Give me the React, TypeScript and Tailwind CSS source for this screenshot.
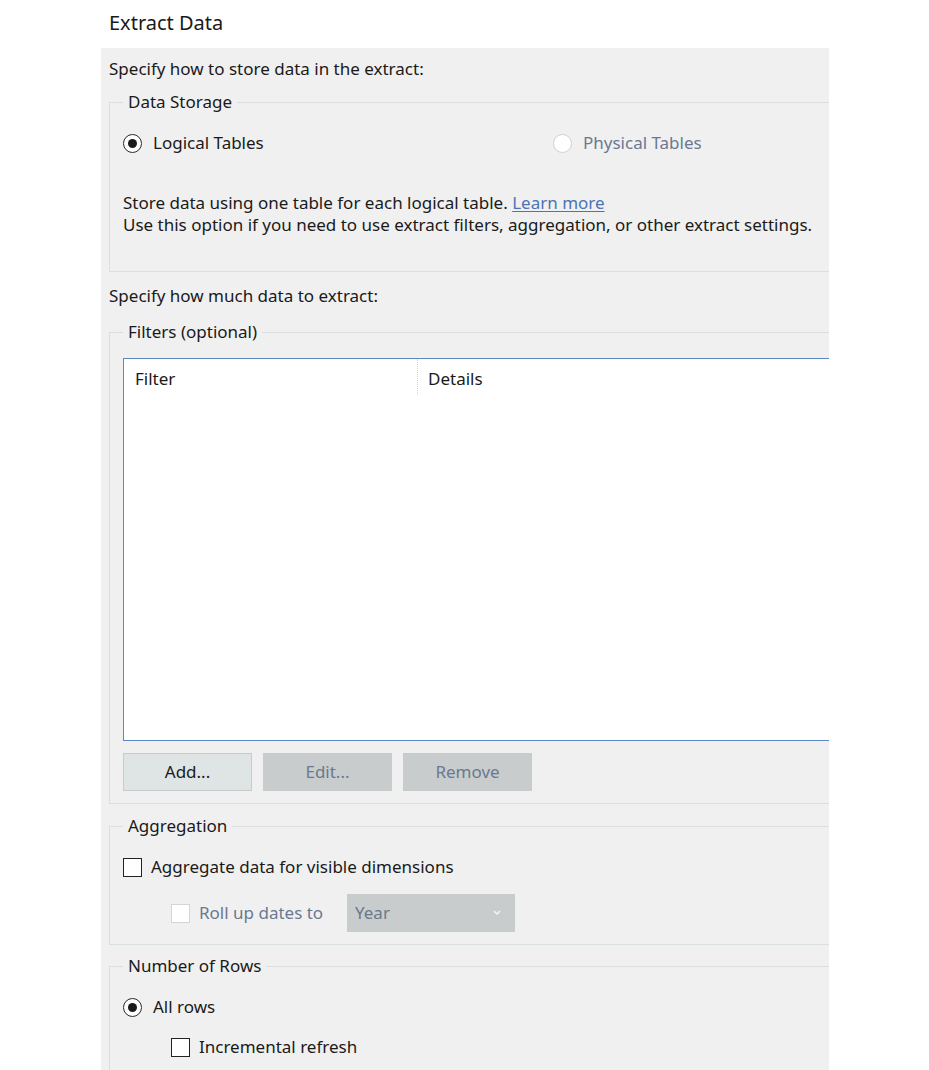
import type { ReactNode } from "react";

const font = { fontFamily: '"Noto Sans", "Open Sans", "DejaVu Sans", sans-serif' };

function GroupBox({ title, children, className = "" }: { title: string; children: ReactNode; className?: string }) {
  return (
    <fieldset className={`border border-r-0 border-[#d9dede] pl-[13px] pr-0 ${className}`}>
      <legend className="px-[5px] text-[17px] leading-[22px] text-[#1a1a1a]">{title}</legend>
      {children}
    </fieldset>
  );
}

function Radio({ checked, disabled, label }: { checked?: boolean; disabled?: boolean; label: string }) {
  return (
    <div className="flex items-center h-[22px]">
      <span
        className={`w-[19px] h-[19px] rounded-full border flex items-center justify-center bg-white ${
          disabled ? "border-[#cfd2d2]" : "border-[#2a2a2a]"
        }`}
      >
        {checked && <span className="w-[9px] h-[9px] rounded-full bg-[#1a1a1a]" />}
      </span>
      <span className={`ml-[11px] text-[17px] ${disabled ? "text-[#6b7890]" : "text-[#1a1a1a]"}`}>{label}</span>
    </div>
  );
}

function Checkbox({ disabled, label }: { disabled?: boolean; label: string }) {
  return (
    <div className="flex items-center h-[22px]">
      <span className={`w-[19px] h-[19px] border-[1.5px] bg-white ${disabled ? "border-[#d3d6d6]" : "border-[#222]"}`} />
      <span className={`ml-[9px] text-[17px] ${disabled ? "text-[#6b7890]" : "text-[#1a1a1a]"}`}>{label}</span>
    </div>
  );
}

function Button({ label, disabled }: { label: string; disabled?: boolean }) {
  return (
    <button
      className={`w-[129px] h-[38px] text-[17px] border ${
        disabled ? "bg-[#c9cccc] border-[#c9cccc] text-[#6b7890]" : "bg-[#dfe4e4] border-[#c6cbcb] text-[#1a1a1a]"
      }`}
    >
      {label}
    </button>
  );
}

export default function App() {
  return (
    <div className="min-h-[1070px] bg-white pl-[101px]" style={font}>
      <div className="pl-[8px] pt-[9px] h-[48px] text-[20px] leading-[28px] text-[#1a1a1a]">Extract Data</div>
      <div className="w-[728px] h-[1022px] bg-[#f0f0f0] pl-[8px] pt-[10px] overflow-hidden text-[#1a1a1a]">
        <p className="text-[17px] leading-[22px]">Specify how to store data in the extract:</p>

        <GroupBox title="Data Storage" className="mt-[11px] pb-[35px]">
          <div className="flex mt-[19px]">
            <div className="w-[430px]">
              <Radio checked label="Logical Tables" />
            </div>
            <Radio disabled label="Physical Tables" />
          </div>
          <div className="mt-[38px] text-[17px] leading-[22px]">
            <p>
              Store data using one table for each logical table.{" "}
              <a className="text-[#4a74b4] underline underline-offset-2">Learn more</a>
            </p>
            <p>Use this option if you need to use extract filters, aggregation, or other extract settings.</p>
          </div>
        </GroupBox>

        <p className="mt-[13px] text-[17px] leading-[22px]">Specify how much data to extract:</p>

        <GroupBox title="Filters (optional)" className="mt-[14px] pb-[12px]">
          <div className="mt-[15px] h-[383px] bg-white border border-r-0 border-[#5b87c5]">
            <div className="flex h-[36px] text-[17px]">
              <div className="w-[294px] pl-[11px] pt-[7px] border-r border-dotted border-[#d6d9d9]">Filter</div>
              <div className="pl-[10px] pt-[7px]">Details</div>
            </div>
          </div>
          <div className="flex gap-[11px] mt-[12px]">
            <Button label="Add..." />
            <Button label="Edit..." disabled />
            <Button label="Remove" disabled />
          </div>
        </GroupBox>

        <GroupBox title="Aggregation" className="mt-[11px] pb-[12px]">
          <div className="mt-[19px]">
            <Checkbox label="Aggregate data for visible dimensions" />
          </div>
          <div className="flex items-center mt-[16px] pl-[48px]">
            <div className="w-[176px]">
              <Checkbox disabled label="Roll up dates to" />
            </div>
            <div className="w-[168px] h-[38px] bg-[#c9cccc] flex items-center justify-between pl-[8px] pr-[14px] text-[17px] text-[#6b7890]">
              <span>Year</span>
              <svg width="8" height="6" viewBox="0 0 8 6">
                <path d="M1 1 L4 4 L7 1" stroke="#f4f4f4" strokeWidth="1.5" fill="none" />
              </svg>
            </div>
          </div>
        </GroupBox>

        <GroupBox title="Number of Rows" className="mt-[10px] pb-[20px]">
          <div className="mt-[19px]">
            <Radio checked label="All rows" />
          </div>
          <div className="mt-[18px] pl-[48px]">
            <Checkbox label="Incremental refresh" />
          </div>
        </GroupBox>
      </div>
    </div>
  );
}
